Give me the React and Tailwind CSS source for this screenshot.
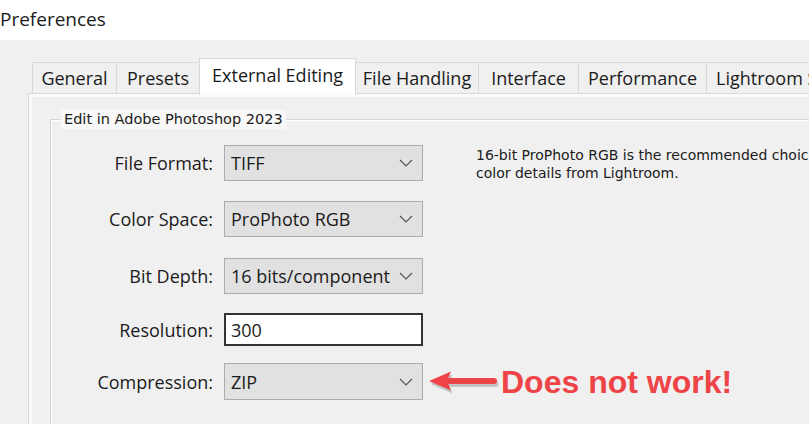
function Chevron() {
  return (
    <svg width="14" height="8" viewBox="0 0 14 8" fill="none">
      <path d="M1 1 L7 7 L13 1" stroke="#555" strokeWidth="1.2" />
    </svg>
  );
}

function Combo({ value }) {
  return (
    <div className="w-[199px] h-[36px] shrink-0 border border-[#adadad] bg-[#e1e1e1] flex items-center justify-between pl-[6px] pr-[9px] text-[18px] leading-none">
      <span>{value}</span>
      <Chevron />
    </div>
  );
}

function Label({ children }) {
  return <div className="w-[161px] shrink-0 text-right text-[18px] leading-none mr-[11px]">{children}</div>;
}

export default function App() {
  return (
    <div className="w-[809px] h-[424px] overflow-hidden bg-[#f0f0f0] font-['Open_Sans',sans-serif] text-[#1b1b1b]">
      <div className="h-[40px] bg-white text-[19px] leading-[38px] whitespace-nowrap">Preferences</div>
      <div className="pl-[28px] pt-[18px]">
        <div className="flex items-end pl-[4px] h-[35px] relative z-10 text-[18px] whitespace-nowrap">
          <div className="w-[84px] shrink-0 h-[31px] border-l border-t border-[#d9d9d9] flex items-center justify-center">General</div>
          <div className="w-[83px] shrink-0 h-[31px] border-l border-t border-[#d9d9d9] flex items-center justify-center">Presets</div>
          <div className="w-[157px] shrink-0 h-[37px] -mb-[2px] bg-white border-l border-t border-r border-[#d9d9d9] flex items-center justify-center pb-[4px]">External Editing</div>
          <div className="w-[122px] shrink-0 h-[31px] border-t border-[#d9d9d9] flex items-center justify-center">File Handling</div>
          <div className="w-[100px] shrink-0 h-[31px] border-l border-t border-[#d9d9d9] flex items-center justify-center">Interface</div>
          <div className="w-[128px] shrink-0 h-[31px] border-l border-t border-[#d9d9d9] flex items-center justify-center">Performance</div>
          <div className="w-[150px] shrink-0 h-[31px] border-l border-t border-[#d9d9d9] flex items-center pl-[9px]">Lightroom Sync</div>
        </div>
        <div className="h-[331px] border-l border-t border-[#d9d9d9] bg-[#f0f0f0]">
          <div className="h-full border-l-[3px] border-t-[3px] border-[#fafafa] pl-[18px] pt-[22px]">
            <div className="relative h-full border-l border-t border-[#d5d5d5]">
              <div className="absolute -top-[10px] left-[10px] bg-[#f8f8f8] px-[3px] font-['DejaVu_Sans',sans-serif] text-[14.5px] leading-[19px] whitespace-nowrap text-[#1b1b1b]">
                Edit in Adobe Photoshop 2023
              </div>
              <div className="h-full border-l border-t border-white pt-[24px] flex">
                <div className="flex flex-col w-[371px] shrink-0">
                  <div className="flex items-center h-[36px]">
                    <Label>File Format:</Label>
                    <Combo value="TIFF" />
                  </div>
                  <div className="flex items-center h-[36px] mt-[20px]">
                    <Label>Color Space:</Label>
                    <Combo value="ProPhoto RGB" />
                  </div>
                  <div className="flex items-center h-[36px] mt-[21px]">
                    <Label>Bit Depth:</Label>
                    <Combo value="16 bits/component" />
                  </div>
                  <div className="flex items-center h-[33px] mt-[19px]">
                    <Label>Resolution:</Label>
                    <div className="w-[199px] shrink-0 h-[33px] border-2 border-[#333] bg-white flex items-center pl-[5px] text-[18px] leading-none">300</div>
                  </div>
                  <div className="flex items-center h-[37px] mt-[17px]">
                    <Label>Compression:</Label>
                    <div className="w-[199px] shrink-0 h-[37px] border border-[#adadad] bg-[#e1e1e1] flex items-center justify-between pl-[6px] pr-[9px] text-[18px] leading-none">
                      <span>ZIP</span>
                      <Chevron />
                    </div>
                    <svg width="72" height="28" viewBox="0 0 72 28" className="ml-[5px] shrink-0">
                      <g opacity="0.18" transform="translate(1.5,2)">
                        <polygon points="1,14 23,4.5 19,14 23,23.5" fill="#000" />
                        <rect x="17" y="11" width="52" height="6" rx="3" fill="#000" />
                      </g>
                      <polygon points="1,13 23,3.5 19,13 23,22.5" fill="#ee4347" />
                      <rect x="17" y="10" width="52" height="6" rx="3" fill="#ee4347" />
                    </svg>
                    <div className="ml-[1px] shrink-0 font-['Liberation_Sans',Arial,sans-serif] font-bold text-[32px] leading-none text-[#ee4347] whitespace-nowrap">
                      Does not work!
                    </div>
                  </div>
                </div>
                <div className="ml-[53px] pt-[1px] font-['DejaVu_Sans',sans-serif] text-[14px] leading-[18px] whitespace-nowrap text-[#1b1b1b]">
                  <div>16-bit ProPhoto RGB is the recommended choice for best preserving</div>
                  <div>color details from Lightroom.</div>
                </div>
              </div>
            </div>
          </div>
        </div>
      </div>
    </div>
  );
}
